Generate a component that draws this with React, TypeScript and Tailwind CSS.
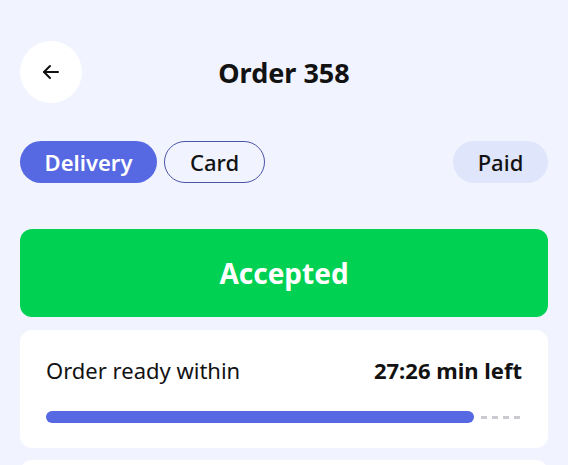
import React from "react";

export default function App() {
  return (
    <div
      className="w-[568px] h-[465px] overflow-hidden bg-[#f1f4fe] px-5 pt-[41px] text-[#121212]"
      style={{ fontFamily: '"Noto Sans", "Open Sans", sans-serif' }}
    >
      {/* Header */}
      <div className="flex items-center h-[62px]">
        <button className="w-[62px] h-[62px] rounded-full bg-white flex items-center justify-center shrink-0">
          <svg width="18" height="16" viewBox="0 0 18 16" fill="none" stroke="#111" strokeWidth="2" strokeLinecap="round" strokeLinejoin="round">
            <path d="M16 8H2" />
            <path d="M8 2L2 8l6 6" />
          </svg>
        </button>
        <div className="flex-1 text-center text-[27px] font-bold leading-none">Order 358</div>
        <div className="w-[62px] shrink-0" />
      </div>

      {/* Pills */}
      <div className="flex items-center mt-[38px] h-[42px]">
        <div className="h-[42px] w-[137px] rounded-full bg-[#5668e2] text-white text-[22px] font-semibold flex items-center justify-center">
          Delivery
        </div>
        <div className="ml-[7px] h-[42px] w-[101px] rounded-full border border-[#4b55a8] text-[22px] font-medium flex items-center justify-center">
          Card
        </div>
        <div className="ml-auto h-[42px] w-[95px] rounded-full bg-[#dfe5fb] text-[22px] font-medium flex items-center justify-center">
          Paid
        </div>
      </div>

      {/* Status */}
      <div className="mt-[46px] h-[88px] rounded-[12px] bg-[#00d152] flex items-center justify-center text-white text-[28px] font-bold">
        Accepted
      </div>

      {/* Timer card */}
      <div className="mt-[13px] rounded-[12px] bg-white px-[26px] pt-[28px] pb-[25px]">
        <div className="flex items-center justify-between h-[24px] text-[22px] leading-[24px]">
          <span>Order ready within</span>
          <span className="font-bold">27:26 min left</span>
        </div>
        <div className="mt-[29px] flex items-center h-[12px]">
          <div className="w-[428px] h-[12px] rounded-full bg-[#5668e2]" />
          <div className="ml-[7px] flex gap-[5px]">
            <span className="w-[6px] h-[3px] bg-[#c9cbd0]" />
            <span className="w-[6px] h-[3px] bg-[#c9cbd0]" />
            <span className="w-[6px] h-[3px] bg-[#c9cbd0]" />
            <span className="w-[6px] h-[3px] bg-[#c9cbd0]" />
          </div>
        </div>
      </div>

      {/* Next card (partially visible) */}
      <div className="mt-[12px] h-[100px] rounded-[12px] bg-white" />
    </div>
  );
}
